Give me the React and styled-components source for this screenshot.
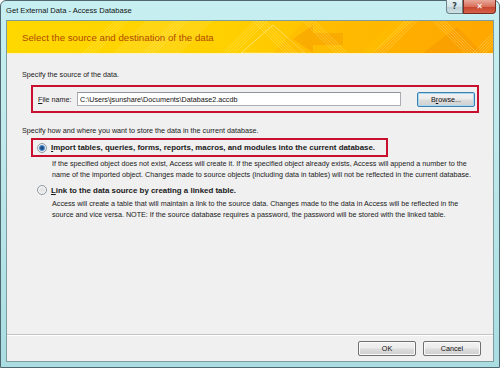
import React from 'react'
import styled, { createGlobalStyle } from 'styled-components'

const Global = createGlobalStyle`
  html, body {
    margin: 0;
    padding: 0;
    background: #ffffff;
  }
  body {
    font-family: "Liberation Sans", Arial, sans-serif;
  }
`

const Window = styled.div`
  width: 500px;
  height: 368px;
  box-sizing: border-box;
  display: flex;
  flex-direction: column;
  padding: 0 5px 5px 5px;
  border: 1px solid #4f6870;
  border-radius: 6px 6px 0 0;
  background: linear-gradient(180deg, #c7eff1 0%, #bfe9ec 40%, #a9dde2 100%);
`

const TitleBar = styled.div`
  height: 19px;
  display: flex;
  align-items: center;
  justify-content: space-between;
`

const Title = styled.span`
  font-size: 7.6px;
  color: #111;
  margin-top: -1px;
`

const Caption = styled.div`
  display: flex;
  align-self: flex-start;
  margin-top: -1px;
  margin-right: -2px;
`

const CapButton = styled.div`
  height: 14px;
  width: ${p => p.$wide ? 33 : 17}px;
  box-sizing: border-box;
  display: flex;
  align-items: center;
  justify-content: center;
  border: 1px solid ${p => p.$red ? '#7a2d22' : '#6d8489'};
  border-top: none;
  border-radius: ${p => p.$red ? '0 0 4px 0' : '0 0 0 4px'};
  background: ${p => p.$red
    ? 'linear-gradient(180deg, #e9a99a 0%, #d8705b 50%, #c7462d 55%, #d5644b 100%)'
    : 'linear-gradient(180deg, #e8f3f5 0%, #d4e4e8 50%, #bcd0d5 55%, #cfe1e4 100%)'};
  font: bold 8px "DejaVu Sans", sans-serif;
  color: ${p => p.$red ? '#ffffff' : '#33454a'};
`

const Client = styled.div`
  flex: 1;
  display: flex;
  flex-direction: column;
  background: #f0f0f0;
  border: 1px solid #7e9ba0;
`

const Header = styled.div`
  position: relative;
  height: 32px;
  display: flex;
  align-items: center;
  padding-left: 15px;
  overflow: hidden;
  background: linear-gradient(90deg, #ffd800 0%, #ffd000 45%, #ffbf00 70%, #ffae00 100%);
  border-bottom: 1px solid #fff2c2;
`

const Pattern = styled.svg`
  position: absolute;
  top: 0;
  right: 0;
  height: 32px;
  width: 420px;
`

const HeaderText = styled.span`
  position: relative;
  font-size: 9.7px;
  color: #b04a00;
`

const Body = styled.div`
  flex: 1;
  display: flex;
  flex-direction: column;
  padding: 15px 0 0 15px;
`

const Label = styled.div`
  font-size: 7.2px;
  color: #1a1a1a;
  line-height: 11px;
  margin-top: ${p => p.$mt || 0}px;
`

const RedBox = styled.div`
  box-sizing: border-box;
  border: 2px solid #c8102e;
  display: flex;
  align-items: center;
  width: ${p => p.$w}px;
  height: ${p => p.$h}px;
  margin-left: ${p => p.$ml}px;
  margin-top: ${p => p.$mt}px;
  padding-left: ${p => p.$pl}px;
`

const FieldLabel = styled.span`
  font-size: 7.2px;
  color: #1a1a1a;
  width: 39px;
  u { text-decoration: underline; }
`

const Input = styled.div`
  box-sizing: border-box;
  width: 324px;
  height: 14px;
  background: #fff;
  border: 1px solid #abadb3;
  border-top-color: #8f939a;
  font-size: 7.2px;
  color: #111;
  display: flex;
  align-items: center;
  padding-left: 2px;
`

const Button = styled.div`
  box-sizing: border-box;
  width: ${p => p.$w}px;
  height: 15px;
  display: flex;
  align-items: center;
  justify-content: center;
  border: 1px solid ${p => p.$focus ? '#3c7fb1' : '#707070'};
  border-radius: 2px;
  background: linear-gradient(180deg, #f2f2f2 0%, #ebebeb 48%, #dddddd 52%, #cfcfcf 100%);
  box-shadow: inset 0 0 0 1px ${p => p.$focus ? '#a8d8f0' : '#fbfbfb'};
  font-size: 7.2px;
  color: #111;
  margin-left: ${p => p.$ml || 0}px;
`

const Option = styled.div`
  display: flex;
  flex-direction: column;
  margin-top: ${p => p.$mt}px;
`

const OptionRow = styled.div`
  display: flex;
  align-items: center;
  gap: 4px;
  margin-left: ${p => p.$ml || 0}px;
`

const Radio = styled.span`
  box-sizing: border-box;
  width: 10px;
  height: 10px;
  border-radius: 50%;
  border: 1px solid #8e9ba4;
  background: radial-gradient(circle, ${p => p.$on
    ? '#0f3a6e 0, #2f67a8 2px, #8fb5d9 3px, #e7eef4 3.3px'
    : '#dedede 0, #eeeeee 3px, #f6f6f6 4px'});
  display: inline-block;
`

const Strong = styled.span`
  font-size: 7.9px;
  font-weight: bold;
  color: #1a1a1a;
  u { text-decoration: underline; }
`

const Desc = styled.div`
  font-size: 7.2px;
  line-height: 11px;
  color: #1a1a1a;
  margin-left: 30px;
  margin-top: ${p => p.$mt}px;
`

const Footer = styled.div`
  height: 26px;
  display: flex;
  align-items: center;
  justify-content: flex-end;
  padding-right: 12px;
  border-top: 1px solid #c4c4c4;
  box-shadow: inset 0 1px 0 #ffffff;
`

function Stripes() {
  const lines = []
  const groups = [
    [10, 1], [70, 1], [150, 1], [180, -1], [230, -1], [300, 1], [360, -1], [400, 1],
  ]
  groups.forEach(([x, dir], g) => {
    for (let i = 0; i < 5; i++) {
      const x0 = x + i * 3
      lines.push(
        <line key={`${g}-${i}`} x1={x0} y1={dir > 0 ? 32 : 0} x2={x0 + 32} y2={dir > 0 ? 0 : 32}
          stroke="#fff4a0" strokeOpacity="0.35" strokeWidth="0.8" />
      )
    }
  })
  return (
    <Pattern viewBox="0 0 420 32" preserveAspectRatio="none">
      <polygon points="40,32 72,0 140,0 108,32" fill="#ffe14a" fillOpacity="0.25" />
      <polygon points="168,32 200,4 232,32" fill="none" stroke="#fff0b0" strokeOpacity="0.7" strokeWidth="0.8" />
      <polygon points="200,32 232,0 320,0 288,32" fill="#ffb000" fillOpacity="0.3" />
      <polygon points="220,18 240,4 240,12 270,12 270,24 240,24 240,32" fill="#f59a00" fillOpacity="0.45" />
      <polygon points="300,32 340,0 420,0 420,32" fill="#ff9f00" fillOpacity="0.4" />
      <polygon points="350,32 384,6 410,32" fill="#f39000" fillOpacity="0.4" />
      {lines}
    </Pattern>
  )
}

export default function App() {
  return (
    <>
      <Global />
      <Window>
        <TitleBar>
          <Title>Get External Data - Access Database</Title>
          <Caption>
            <CapButton>?</CapButton>
            <CapButton $wide $red>✕</CapButton>
          </Caption>
        </TitleBar>
        <Client>
          <Header>
            <Stripes />
            <HeaderText>Select the source and destination of the data</HeaderText>
          </Header>
          <Body>
            <Label>Specify the source of the data.</Label>
            <RedBox $w={448} $h={28} $ml={9} $mt={5} $pl={5}>
              <FieldLabel><u>F</u>ile name:</FieldLabel>
              <Input>C:\Users\jsunshare\Documents\Database2.accdb</Input>
              <Button $w={58} $ml={16} $focus><span>B<u>r</u>owse...</span></Button>
            </RedBox>
            <Label $mt={12}>Specify how and where you want to store the data in the current database.</Label>
            <Option $mt={2}>
              <RedBox $w={357} $h={19} $ml={9} $mt={0} $pl={4}>
                <OptionRow>
                  <Radio $on />
                  <Strong><u>I</u>mport tables, queries, forms, reports, macros, and modules into the current database.</Strong>
                </OptionRow>
              </RedBox>
              <Desc $mt={1}>
                If the specified object does not exist, Access will create it. If the specified object already exists, Access will append a number to the<br />
                name of the imported object. Changes made to source objects (including data in tables) will not be reflected in the current database.
              </Desc>
            </Option>
            <Option $mt={5}>
              <OptionRow $ml={15}>
                <Radio />
                <Strong><u>L</u>ink to the data source by creating a linked table.</Strong>
              </OptionRow>
              <Desc $mt={3}>
                Access will create a table that will maintain a link to the source data. Changes made to the data in Access will be reflected in the<br />
                source and vice versa. NOTE:  If the source database requires a password, the password will be stored with the linked table.
              </Desc>
            </Option>
          </Body>
          <Footer>
            <Button $w={58}>OK</Button>
            <Button $w={58} $ml={7}>Cancel</Button>
          </Footer>
        </Client>
      </Window>
    </>
  )
}
